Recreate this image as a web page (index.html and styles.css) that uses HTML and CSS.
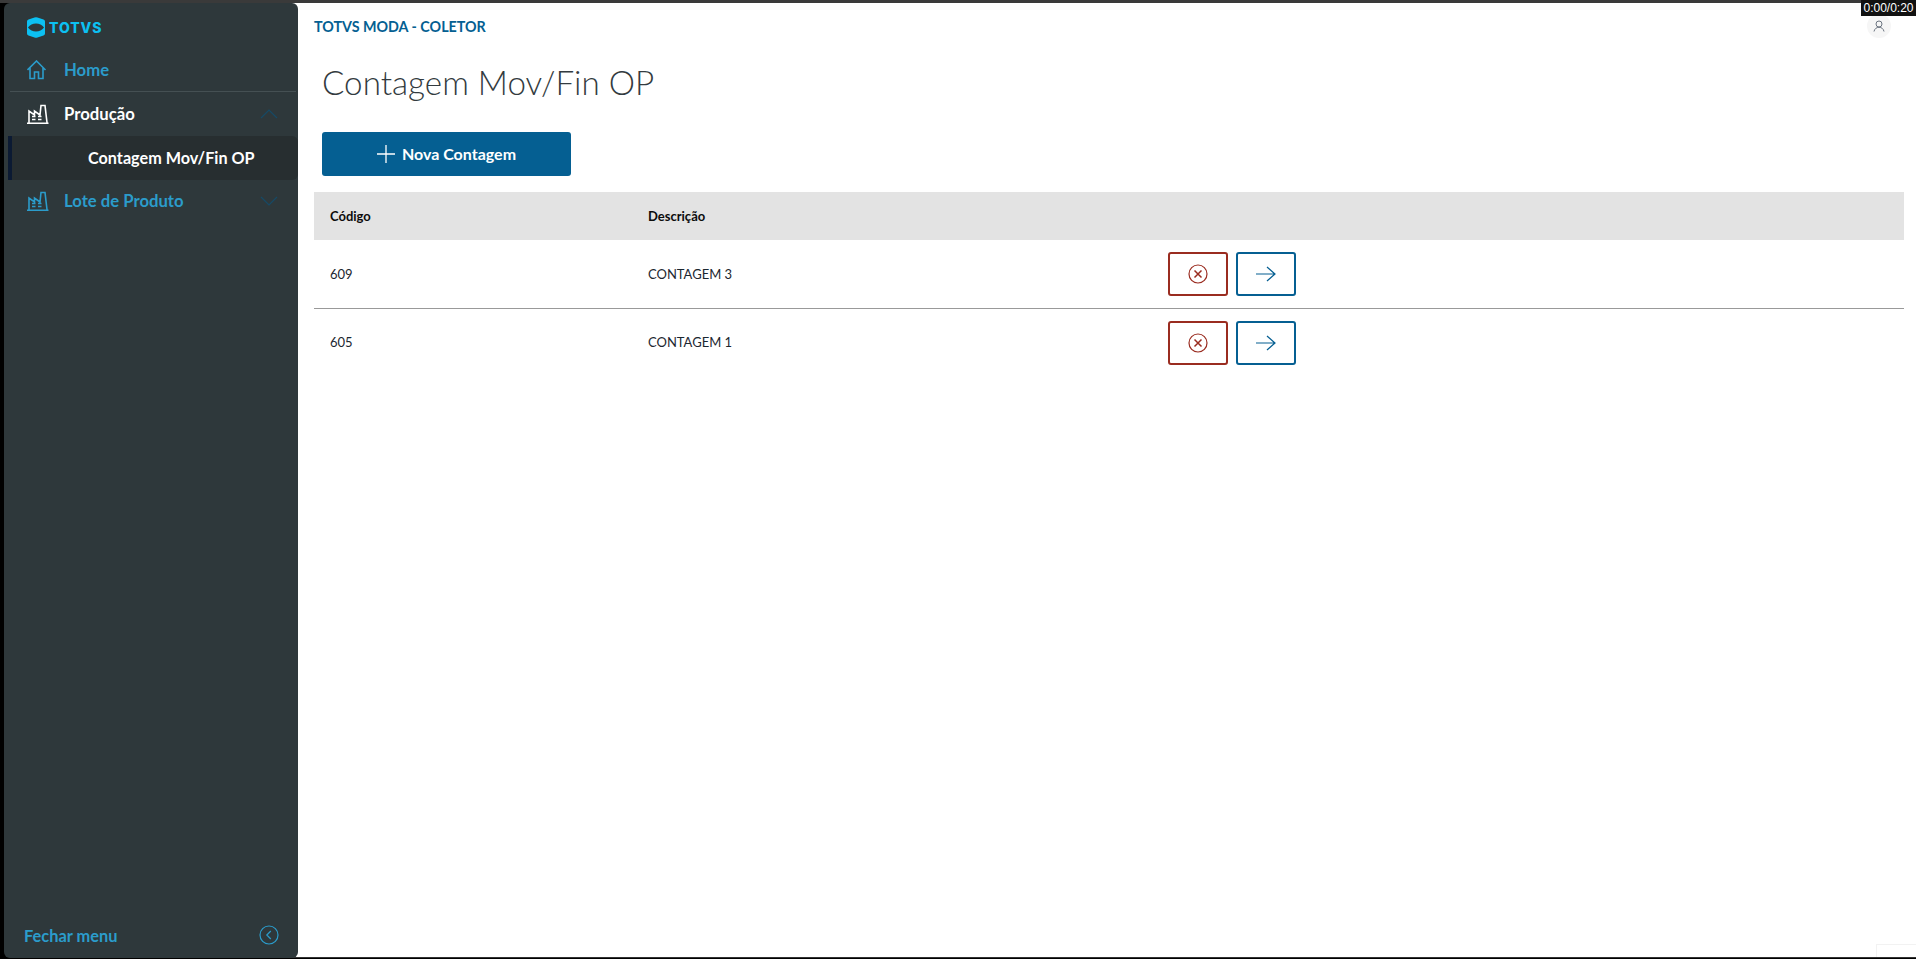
FILE: index.html
```html
<!DOCTYPE html>
<html lang="pt-BR">
<head>
<meta charset="utf-8">
<title>TOTVS Moda - Coletor</title>
<link rel="stylesheet" href="styles.css">
</head>
<body>
<div class="topbar"></div>
<div class="shell">
  <aside class="sidebar">
    <div class="brand">
      <svg class="brand-mark" viewBox="0 0 18 21" width="18" height="21"><path fill="#0cc0f2" fill-rule="evenodd" d="M7.500.5Q9 0 10.500.5L16.500 2.500Q18 3 18 4.500V16.500Q18 18 16.500 18.500L10.500 20.500Q9 21 7.500 20.500L1.500 18.500Q0 18 0 16.500V4.500Q0 3 1.500 2.500ZM1 10.500Q4 6.500 9 6.500t8 4Q14 14.500 9 14.500t-8-4Z"/></svg>
      <span class="brand-name">TOTVS</span>
    </div>
    <nav class="nav">
      <a class="nav-row nav-home">
        <svg class="nav-icon" viewBox="0 0 22 20" width="22" height="20" fill="none" stroke="#2b9ccb" stroke-width="1.600"><path d="M.5 10 9.500 1l9 9M3 8v10.500h4.500V12h4v6.500H16V8"/></svg>
        <span>Home</span>
      </a>
      <a class="nav-row nav-open">
        <svg class="nav-icon" viewBox="0 0 22 20" width="22" height="20" fill="none" stroke="#fff" stroke-width="1.600"><path d="M2 18.500V7l5.500 4V7l5.500 4 1-9.500h4L20 18.500M0 19.300h21.500M5 12.500h3.500M11 12.500h3.500M5 15.500h3.500M11 15.500h3.500"/></svg>
        <span>Produção</span>
        <svg class="chevron" viewBox="0 0 18 10" width="18" height="10" fill="none" stroke="#164a66" stroke-width="1.200"><path d="M1 9 9 1l8 8"/></svg>
      </a>
      <a class="nav-sub">Contagem Mov/Fin OP</a>
      <a class="nav-row nav-lote">
        <svg class="nav-icon" viewBox="0 0 22 20" width="22" height="20" fill="none" stroke="#2b9ccb" stroke-width="1.600"><path d="M2 18.500V7l5.500 4V7l5.500 4 1-9.500h4L20 18.500M0 19.300h21.500M5 12.500h3.500M11 12.500h3.500M5 15.500h3.500M11 15.500h3.500"/></svg>
        <span>Lote de Produto</span>
        <svg class="chevron" viewBox="0 0 18 10" width="18" height="10" fill="none" stroke="#164a66" stroke-width="1.200"><path d="M1 1l8 8 8-8"/></svg>
      </a>
    </nav>
    <div class="side-foot">
      <span>Fechar menu</span>
      <svg viewBox="0 0 20 20" width="20" height="20" fill="none" stroke="#2b9ccb" stroke-width="1.200"><circle cx="10" cy="10" r="9"/><path d="M11.800 6 7.800 10l4 4"/></svg>
    </div>
  </aside>
  <main class="main">
    <header class="app-head">TOTVS MODA - COLETOR</header>
    <h1 class="title">Contagem Mov/Fin OP</h1>
    <button class="new-btn">
      <svg viewBox="0 0 18 18" width="18" height="18" fill="none" stroke="#fff" stroke-width="1.300"><path d="M9 0v18M0 9h18"/></svg>
      <span>Nova Contagem</span>
    </button>
    <section class="table">
      <div class="row head"><div>Código</div><div>Descrição</div><div></div></div>
      <div class="row body-row line">
        <div>609</div><div>CONTAGEM 3</div>
        <div class="actions">
          <button class="act danger"><svg viewBox="0 0 20 20" width="20" height="20" fill="none" stroke="#9a2c20" stroke-width="1.200"><circle cx="10" cy="10" r="9"/><path d="M6.500 6.500l7 7M13.500 6.500l-7 7" stroke-width="1.500"/></svg></button>
          <button class="act go"><svg viewBox="0 0 20 16" width="20" height="16" fill="none" stroke="#055f92" stroke-width="1.200"><path d="M0 8h19M11 1l8 7-8 7"/></svg></button>
        </div>
      </div>
      <div class="row body-row">
        <div class="cell-up">605</div><div class="cell-up">CONTAGEM 1</div>
        <div class="actions">
          <button class="act danger"><svg viewBox="0 0 20 20" width="20" height="20" fill="none" stroke="#9a2c20" stroke-width="1.200"><circle cx="10" cy="10" r="9"/><path d="M6.500 6.500l7 7M13.500 6.500l-7 7" stroke-width="1.500"/></svg></button>
          <button class="act go"><svg viewBox="0 0 20 16" width="20" height="16" fill="none" stroke="#055f92" stroke-width="1.200"><path d="M0 8h19M11 1l8 7-8 7"/></svg></button>
        </div>
      </div>
    </section>
    <div class="avatar"><svg viewBox="0 0 12 12" width="12" height="12" fill="none" stroke="#6b7480" stroke-width="1"><circle cx="6" cy="4" r="3"/><path d="M1 11.500C1.500 8.800 3.500 7.300 6 7.300s4.500 1.500 5 4.200"/></svg></div>
    <div class="corner-widget"></div>
  </main>
</div>
<div class="timer">0:00/0:20</div>
</body>
</html>
```
FILE: styles.css
```css
* { box-sizing: border-box; }
html, body { margin: 0; height: 100%; overflow: hidden; }
body { background: #000; font-family: "Lato", "Open Sans", sans-serif; position: relative; }
a { display: block; }
.topbar { height: 3px; background: #3a3a3a; }
.shell { display: flex; height: 955px; padding-left: 4px; background: #000; }
.sidebar { width: 294px; flex: none; display: flex; flex-direction: column; background: #2e383b; border-radius: 6px; position: relative; z-index: 1; }
.brand { height: 46px; padding: 3px 0 0 23px; display: flex; align-items: center; gap: 4px; }
.brand-name { font-family: "Inter", sans-serif; font-weight: 800; font-size: 14px; letter-spacing: 0.9px; color: #0cc0f2; }
.nav { flex: 1; }
.nav-row { display: flex; align-items: center; height: 43px; padding: 0 0 2px 23px; font-size: 16.700px; font-weight: 700; color: #2b9ccb; }
.nav-icon { width: 22px; margin-right: 15px; flex: none; }
.nav-home { height: 43px; position: relative; border-bottom: 1px solid #455053; margin: 0 2px 0 6px; padding: 0 0 0 17px; }
.nav-open { color: #fff; height: 44px; padding-bottom: 0; }
.nav-lote { height: 43px; }
.chevron { margin-left: auto; margin-right: 20px; }
.nav-sub { height: 44px; line-height: 44px; margin-left: 4px; padding-left: 76px; background: #272e30; border-left: 4px solid #0b1a33; border-radius: 0 6px 6px 0; font-size: 16.200px; font-weight: 700; color: #fff; }
.side-foot { display: flex; align-items: center; justify-content: space-between; padding: 0 19px 0 20px; height: 46px; font-size: 16.400px; font-weight: 700; color: #2b9ccb; }
.main { flex: 1; background: #fff; position: relative; margin-left: -6px; padding: 0 12px 0 22px; border-bottom: 1px solid #333; }
.app-head { height: 48px; padding-top: 16px; font-size: 14.300px; line-height: 16px; font-weight: 700; color: #055f92; }
.title { margin: 0 0 0 8px; font-size: 33.200px; line-height: 40px; font-weight: 300; color: #333b40; height: 81px; padding-top: 11px; }
.new-btn { display: flex; align-items: center; justify-content: center; gap: 7px; width: 249px; height: 44px; margin: 0 0 16px 8px; padding: 0 0 1px; background: #055f92; border: 0; border-radius: 3px; color: #fff; font: 700 16px "Lato", sans-serif; }
.table { display: block; }
.row { display: grid; grid-template-columns: 318px 520px 1fr; align-items: center; font-size: 13px; color: #1c2730; }
.row > div { padding-left: 16px; }
.row > .cell-up { padding-bottom: 2px; }
.head { height: 48px; background: #e3e3e3; font-weight: 700; color: #0c0c0c; }
.body-row { height: 68px; }
.line { height: 69px; border-bottom: 1px solid #999; }
.actions { display: flex; gap: 8px; }
.act { width: 60px; height: 44px; padding: 0; display: flex; align-items: center; justify-content: center; background: #fff; border-radius: 3px; border: 2px solid; }
.danger { border-color: #9a2c20; }
.go { border-color: #055f92; }
.avatar { position: absolute; top: 11px; right: 25px; width: 24px; height: 24px; border-radius: 50%; background: #f6f6f6; display: flex; align-items: center; justify-content: center; }
.corner-widget { position: absolute; right: 0; bottom: 0; width: 40px; height: 13px; border: 1px solid #f2f2f2; border-width: 1px 0 0 1px; }
.timer { position: absolute; top: 0; right: 0; width: 55px; height: 16px; background: #111; color: #fff; font: 12px/16px "Liberation Sans", sans-serif; text-align: center; }
```
